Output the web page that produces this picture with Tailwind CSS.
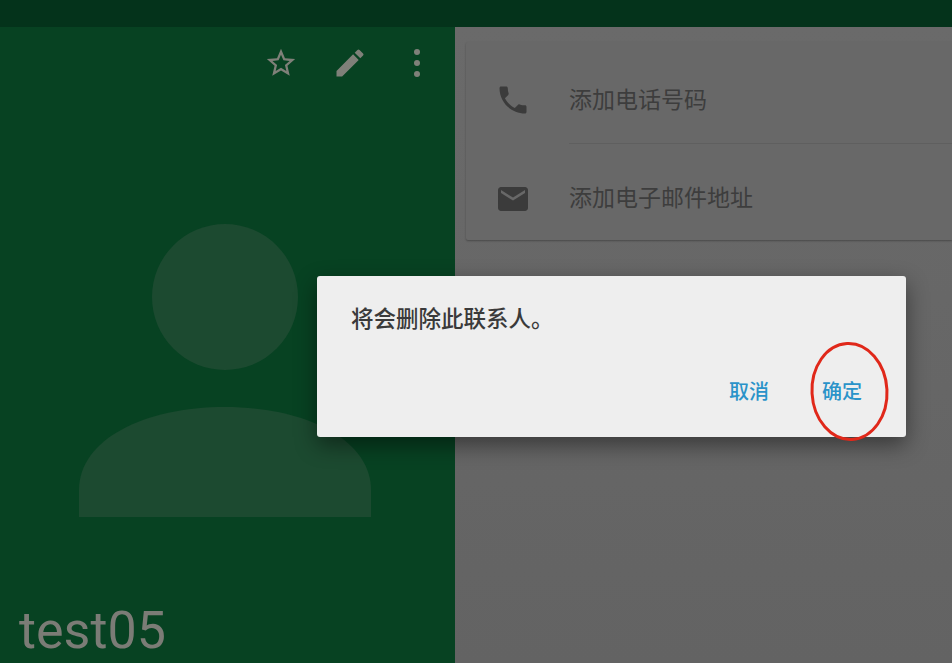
<!DOCTYPE html>
<html lang="zh-CN">
  <head>
    <meta charset="UTF-8" />
    <meta name="viewport" content="width=device-width, initial-scale=1.0" />
    <title>Contact</title>
    <script src="https://cdn.jsdelivr.net/npm/@tailwindcss/browser@4"></script>
  </head>
  <body class="relative w-[952px] h-[663px] overflow-hidden bg-[#6b6b6b] font-['Noto_Sans_CJK_SC',sans-serif]">
    <!-- status bar -->
    <div class="h-[27px] bg-[#04331b]"></div>

    <div class="flex h-[636px]">
      <!-- contact header -->
      <div class="w-[455px] shrink-0 bg-[#074222] flex flex-col">
        <div class="h-[72px] flex items-center justify-end text-[#7f8079]">
          <svg class="w-[34px] h-[34px] mr-[34px]" viewBox="0 0 24 24" fill="currentColor">
            <path d="M22 9.24l-7.19-.62L12 2 9.19 8.63 2 9.24l5.46 4.73L5.82 21 12 17.27 18.18 21l-1.63-7.03L22 9.24zM12 15.4l-3.76 2.27 1-4.28-3.32-2.88 4.38-.38L12 6.1l1.71 4.04 4.38.38-3.32 2.88 1 4.28L12 15.4z" />
          </svg>
          <svg class="w-[36px] h-[36px] mr-[46px]" viewBox="0 0 24 24" fill="currentColor">
            <path d="M3 17.25V21h3.75L17.81 9.94l-3.75-3.75L3 17.25zM20.71 7.04a1 1 0 0 0 0-1.41l-2.34-2.34a1 1 0 0 0-1.41 0l-1.83 1.83 3.75 3.75 1.83-1.83z" />
          </svg>
          <div class="flex flex-col gap-[5px] mr-[35px]">
            <span class="w-[6px] h-[6px] rounded-full bg-[#7f8079]"></span>
            <span class="w-[6px] h-[6px] rounded-full bg-[#7f8079]"></span>
            <span class="w-[6px] h-[6px] rounded-full bg-[#7f8079]"></span>
          </div>
        </div>
        <div class="flex justify-start pl-[79px] pt-[125px]">
          <svg class="w-[292px] h-[293px]" viewBox="0 0 292 293" fill="#1c4a30">
            <circle cx="146" cy="73" r="73" />
            <path d="M0 293V266C0 215 66 183 146 183S292 215 292 266V293Z" />
          </svg>
        </div>
        <div class="pl-[19px] pt-[86px] font-['Roboto',sans-serif] text-[52px] leading-[56px] text-[#7b7c76]">test05</div>
      </div>

      <!-- details -->
      <div class="flex-1 pl-[11px] pt-[15px] bg-gradient-to-b from-[#6a6a6a] to-[#636363]">
        <div class="h-[198px] rounded-l-[2px] bg-[#686868] shadow-[0_1px_2px_rgba(0,0,0,0.3)] text-[#3d3d3d]">
          <div class="flex items-center h-[101px] pt-[15px] pl-[29px]">
            <svg class="w-[36px] h-[36px] shrink-0" viewBox="0 0 24 24" fill="#3b3b3b">
              <path d="M6.62 10.79c1.44 2.83 3.76 5.14 6.59 6.59l2.2-2.2c.27-.27.67-.36 1.02-.24 1.12.37 2.33.57 3.57.57.55 0 1 .45 1 1V20c0 .55-.45 1-1 1-9.39 0-17-7.61-17-17 0-.55.45-1 1-1h3.5c.55 0 1 .45 1 1 0 1.25.2 2.45.57 3.57.11.35.03.74-.25 1.02l-2.2 2.2z" />
            </svg>
            <span class="ml-[38px] mt-[-5px] text-[23px] leading-[30px]">添加电话号码</span>
          </div>
          <div class="ml-[103px] h-px bg-[#5f5f5f]"></div>
          <div class="flex items-center h-[96px] text-[#3d3d3d] pl-[29px] pt-[15px] pb-[2px]">
            <svg class="w-[36px] h-[36px] shrink-0" viewBox="0 0 24 24" fill="#3b3b3b">
              <path d="M20 4H4c-1.1 0-1.99.9-1.99 2L2 18c0 1.1.9 2 2 2h16c1.1 0 2-.9 2-2V6c0-1.1-.9-2-2-2zm0 4l-8 5-8-5V6l8 5 8-5v2z" />
            </svg>
            <span class="ml-[38px] mt-[-6px] text-[23px] leading-[30px]">添加电子邮件地址</span>
          </div>
        </div>
      </div>
    </div>

    <!-- confirm dialog -->
    <div class="absolute left-[317px] top-[276px] w-[589px] h-[161px] rounded-[3px] bg-[#eeeeee] shadow-[0_8px_22px_rgba(0,0,0,0.45)] flex flex-col justify-between">
      <p class="pl-[34px] pt-[26px] text-[22.5px] leading-[30px] font-medium text-[#3a3a3a]">将会删除此联系人。</p>
      <div class="flex justify-end gap-[53px] pr-[44px] pb-[31px] text-[20px] leading-[30px] font-medium text-[#2a93c9]">
        <span>取消</span>
        <span>确定</span>
      </div>
    </div>

    <!-- red annotation -->
    <svg class="absolute left-[808px] top-[340px] w-[84px] h-[104px]" viewBox="0 0 84 104" fill="none">
      <ellipse cx="41.5" cy="51.5" rx="37.5" ry="48" stroke="#e0281a" stroke-width="3" transform="rotate(-3 41.5 51.5)" />
    </svg>
  </body>
</html>
